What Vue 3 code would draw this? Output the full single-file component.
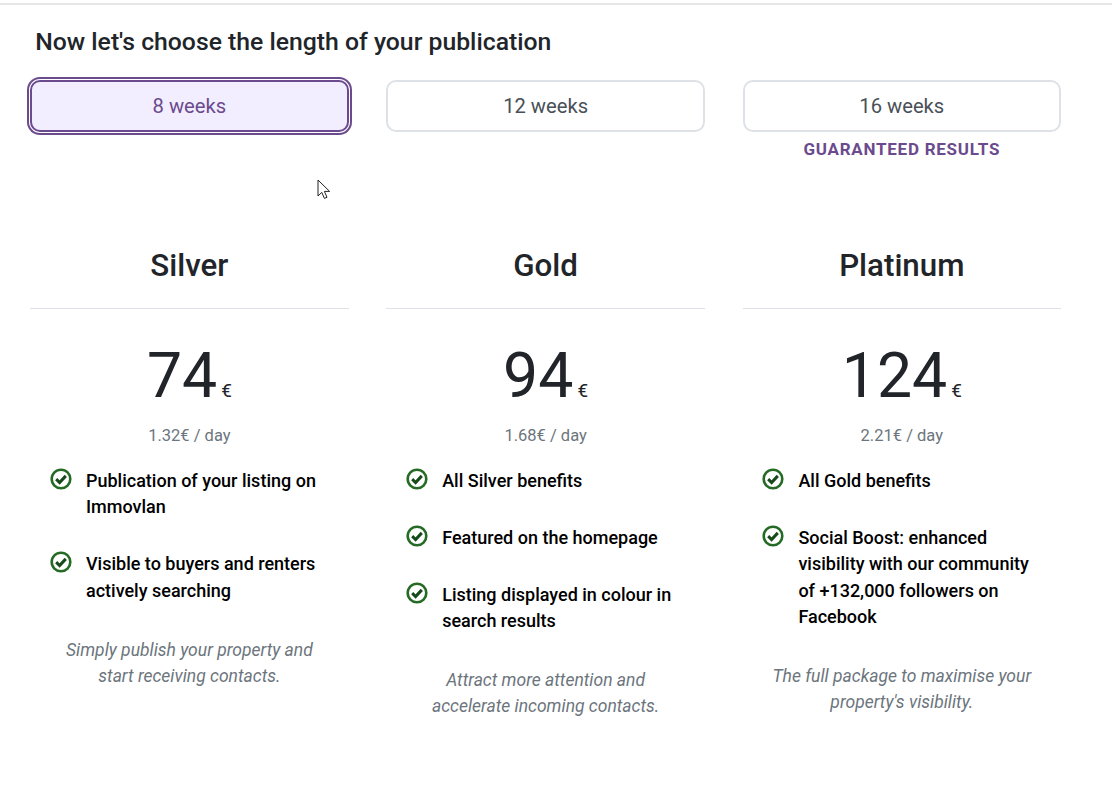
<template>
  <div class="page">
    <h2 class="heading">Now let's choose the length of your publication</h2>

    <div class="grid durations">
      <div v-for="d in durations" :key="d.label" class="duration">
        <button type="button" class="duration-btn" :class="{ active: d.active }">{{ d.label }}</button>
        <div v-if="d.note" class="duration-note">{{ d.note }}</div>
      </div>
    </div>

    <div class="grid plans">
      <div v-for="plan in plans" :key="plan.name" class="plan">
        <h3 class="plan-name">{{ plan.name }}</h3>
        <div class="price">
          <span class="amount">{{ plan.price }}</span><span class="currency">€</span>
        </div>
        <div class="per-day">{{ plan.perDay }}€ / day</div>
        <ul class="features">
          <li v-for="f in plan.features" :key="f">
            <svg class="check" viewBox="0 0 22 22" width="22" height="22" fill="none">
              <circle cx="11" cy="11" r="9.3" stroke="#256b25" stroke-width="2.6" />
              <path d="M6.2 11.2l3.4 3.3 6.2-6.6" stroke="#174a1a" stroke-width="3" />
            </svg>
            <span>{{ f }}</span>
          </li>
        </ul>
        <p class="tagline">{{ plan.tagline }}</p>
      </div>
    </div>

    <svg class="cursor" width="14" height="21" viewBox="0 0 14 21">
      <path d="M1 1v16l3.8-3.6 2.6 6 2.6-1.1-2.6-5.9h5.2z" fill="#fff" stroke="#222" stroke-width="1" />
    </svg>
  </div>
</template>

<script setup>
const durations = [
  { label: '8 weeks', active: true },
  { label: '12 weeks' },
  { label: '16 weeks', note: 'GUARANTEED RESULTS' }
]

const plans = [
  {
    name: 'Silver',
    price: 74,
    perDay: '1.32',
    features: ['Publication of your listing on Immovlan', 'Visible to buyers and renters actively searching'],
    tagline: 'Simply publish your property and start receiving contacts.'
  },
  {
    name: 'Gold',
    price: 94,
    perDay: '1.68',
    features: ['All Silver benefits', 'Featured on the homepage', 'Listing displayed in colour in search results'],
    tagline: 'Attract more attention and accelerate incoming contacts.'
  },
  {
    name: 'Platinum',
    price: 124,
    perDay: '2.21',
    features: ['All Gold benefits', 'Social Boost: enhanced visibility with our community of +132,000 followers on Facebook'],
    tagline: "The full package to maximise your property's visibility."
  }
]
</script>

<style>
html, body {
  background: #fff;
}
</style>

<style scoped>
.page {
  position: relative;
  height: 790px;
  box-sizing: border-box;
  padding: 0 51px 0 30.2px;
  border-top: 1px solid transparent;
  overflow: hidden;
  font-family: Roboto, "Liberation Sans", sans-serif;
  color: #212529;
}

.page::before {
  content: '';
  position: absolute;
  top: 2px;
  left: 0;
  right: 0;
  height: 2px;
  background: #e6e6e6;
}

.heading {
  margin: 26px 0 0 5px;
  font-size: 24.75px;
  line-height: 29px;
  font-weight: 500;
}

.grid {
  display: grid;
  grid-template-columns: repeat(3, 1fr);
  column-gap: 37.8px;
}

.durations {
  margin-top: 24px;
  height: 168px;
}

.duration-btn {
  display: block;
  box-sizing: border-box;
  width: 100%;
  height: 52px;
  padding: 0;
  border: 2px solid #dee2e6;
  border-radius: 10px;
  background: #fff;
  color: #495057;
  font-family: inherit;
  font-size: 20.2px;
}

.duration-btn.active {
  border-color: #6b4a8d;
  background: #f2eeff;
  color: #6b4a8d;
  box-shadow: 0 0 0 1px #fff, 0 0 0 3px #6b4a8d;
}

.duration-note {
  margin-top: 7px;
  text-align: center;
  font-size: 17px;
  line-height: 20px;
  font-weight: 700;
  letter-spacing: 0.75px;
  color: #6b4a8d;
}

.plan-name {
  margin: 0;
  padding-bottom: 24px;
  border-bottom: 1px solid #dee2e6;
  text-align: center;
  font-size: 31.3px;
  line-height: 36px;
  font-weight: 500;
}

.price {
  margin-top: 29px;
  text-align: center;
  line-height: 76px;
}

.amount {
  font-size: 62.5px;
  font-weight: 400;
}

.currency {
  margin-left: 4px;
  font-size: 19px;
}

.per-day {
  margin-top: -6px;
  text-align: center;
  font-size: 16.5px;
  line-height: 24px;
  color: #6c757d;
}

.features {
  margin: 20px 0 0;
  padding: 0 20px 0 19.8px;
  list-style: none;
}

.features li {
  display: flex;
  gap: 14px;
  margin-bottom: 30.4px;
  font-size: 18px;
  line-height: 26.4px;
  font-weight: 500;
  color: #000;
}

.features li:last-child {
  margin-bottom: 0;
}

.check {
  flex: none;
}

.tagline {
  margin: 33px 26px 0;
  text-align: center;
  font-size: 17.5px;
  line-height: 26px;
  font-style: italic;
  color: #6c757d;
}

.cursor {
  position: absolute;
  left: 317px;
  top: 178px;
}
</style>
